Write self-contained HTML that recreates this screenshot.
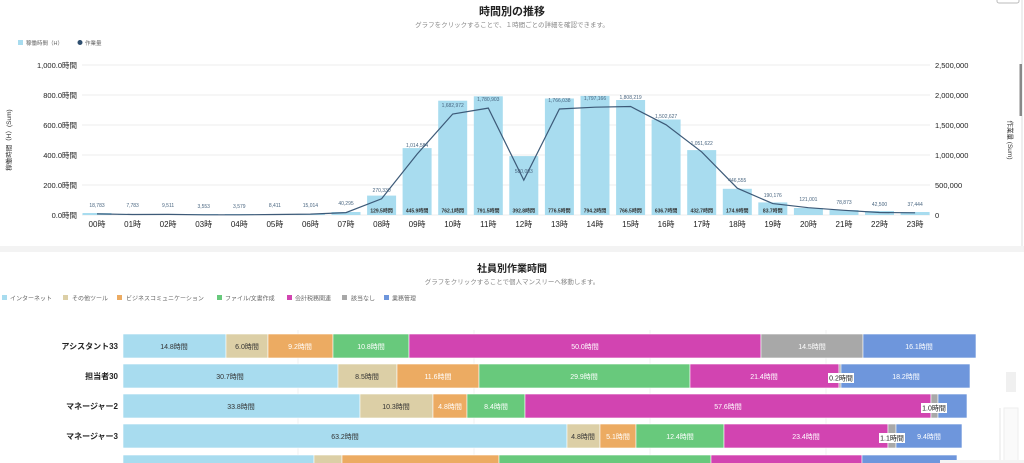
<!DOCTYPE html>
<html><head><meta charset="utf-8"><style>
html,body{margin:0;padding:0;background:#fff;width:1024px;height:463px;overflow:hidden;}
svg{display:block;font-family:"Liberation Sans","Noto Sans CJK JP",sans-serif;}
</style></head><body>
<svg width="1024" height="463" viewBox="0 0 1024 463" xmlns="http://www.w3.org/2000/svg">
<rect x="0" y="0" width="1024" height="463" fill="#fff"/>
<rect x="0" y="246" width="1024" height="6" fill="#f3f3f3"/>
<line x1="1022" y1="0" x2="1022" y2="246" stroke="#ddd" stroke-width="1"/>
<rect x="1019.5" y="64" width="2.5" height="52" fill="#888"/>
<rect x="997" y="-3" width="22" height="6" rx="2" fill="#fff" stroke="#bbb"/>

<text x="512" y="15" text-anchor="middle" font-size="11" font-weight="bold" fill="#222">時間別の推移</text>
<text x="512" y="27" text-anchor="middle" font-size="6.5" fill="#888">グラフをクリックすることで、１時間ごとの詳細を確認できます。</text>
<rect x="18" y="40" width="5" height="5" fill="#a8dcef"/>
<text x="26" y="45" font-size="5.5" fill="#666">稼働時間（H）</text>
<circle cx="80" cy="42.5" r="2.5" fill="#2f4f6f"/>
<text x="85" y="45" font-size="5.5" fill="#666">作業量</text>

<g stroke="#e8e8e8" stroke-width="0.8">
<line x1="82" y1="65" x2="930" y2="65"/><line x1="82" y1="95" x2="930" y2="95"/>
<line x1="82" y1="125" x2="930" y2="125"/><line x1="82" y1="155" x2="930" y2="155"/>
<line x1="82" y1="185" x2="930" y2="185"/><line x1="82" y1="215" x2="930" y2="215"/>
</g>
<g font-size="7.5" fill="#222" text-anchor="end">
<text x="77" y="68">1,000.0時間</text><text x="77" y="98">800.0時間</text><text x="77" y="128">600.0時間</text>
<text x="77" y="158">400.0時間</text><text x="77" y="188">200.0時間</text><text x="77" y="218">0.0時間</text>
</g>
<g font-size="7.5" fill="#222">
<text x="935" y="68">2,500,000</text><text x="935" y="98">2,000,000</text><text x="935" y="128">1,500,000</text>
<text x="935" y="158">1,000,000</text><text x="935" y="188">500,000</text><text x="935" y="218">0</text>
</g>
<text transform="translate(11,140) rotate(-90)" text-anchor="middle" font-size="6.5" fill="#333">稼働時間（H）(Sum)</text>
<text transform="translate(1008,140) rotate(90)" text-anchor="middle" font-size="6.5" fill="#333">作業量 (Sum)</text>

<g fill="#a8dcef">
<rect x="82.5" y="213" width="29" height="2"/><rect x="118.1" y="214" width="29" height="1"/>
<rect x="153.6" y="214" width="29" height="1"/><rect x="189.2" y="214" width="29" height="1"/>
<rect x="224.8" y="214" width="29" height="1"/><rect x="260.4" y="214" width="29" height="1"/>
<rect x="295.9" y="214" width="29" height="1"/><rect x="331.5" y="212" width="29" height="3"/>
<rect x="367.1" y="195.6" width="29" height="19.4"/><rect x="402.6" y="148.1" width="29" height="66.9"/>
<rect x="438.2" y="100.7" width="29" height="114.3"/><rect x="473.8" y="96.3" width="29" height="118.7"/>
<rect x="509.3" y="156.1" width="29" height="58.9"/><rect x="544.9" y="98.5" width="29" height="116.5"/>
<rect x="580.5" y="95.9" width="29" height="119.1"/><rect x="616.1" y="100" width="29" height="115"/>
<rect x="651.6" y="119.5" width="29" height="95.5"/><rect x="687.2" y="150.1" width="29" height="64.9"/>
<rect x="722.8" y="188.8" width="29" height="26.2"/><rect x="758.3" y="202.4" width="29" height="12.6"/>
<rect x="793.9" y="208" width="29" height="7"/><rect x="829.5" y="210" width="29" height="5"/>
<rect x="865" y="211" width="29" height="4"/><rect x="900.6" y="212" width="29" height="3"/>
</g>
<g font-size="5" font-weight="bold" fill="#333" text-anchor="middle">
<text x="381.6" y="212.5">129.5時間</text><text x="417.1" y="212.5">445.9時間</text><text x="452.7" y="212.5">762.1時間</text>
<text x="488.3" y="212.5">791.5時間</text><text x="523.8" y="212.5">392.8時間</text><text x="559.4" y="212.5">776.5時間</text>
<text x="595" y="212.5">794.2時間</text><text x="630.6" y="212.5">766.5時間</text><text x="666.1" y="212.5">636.7時間</text>
<text x="701.7" y="212.5">432.7時間</text><text x="737.3" y="212.5">174.9時間</text><text x="772.8" y="212.5">83.7時間</text>
</g>
<polyline fill="none" stroke="#3d5a78" stroke-width="1.2" points="97,213.9 132.6,214.5 168.1,214.4 203.7,214.8 239.3,214.8 274.9,214.5 310.4,214.1 346,212.6 381.6,198.8 417.1,154.1 452.7,114 488.3,108.1 523.8,180.2 559.4,109 595,107.2 630.6,106.5 666.1,124.8 701.7,151.9 737.3,188.2 772.8,203.6 808.4,207.7 844,210.3 879.5,212.5 915.1,212.8"/>
<g font-size="5" fill="#4a6680" text-anchor="middle">
<text x="97" y="207">18,783</text><text x="132.6" y="207">7,783</text><text x="168.1" y="207">9,511</text>
<text x="203.7" y="208">3,553</text><text x="239.3" y="208">3,579</text><text x="274.9" y="207">8,411</text>
<text x="310.4" y="207">15,014</text><text x="346" y="205">40,295</text><text x="381.6" y="192">270,330</text>
<text x="417.1" y="147">1,014,584</text><text x="452.7" y="107">1,682,972</text><text x="488.3" y="101">1,780,903</text>
<text x="523.8" y="173">580,003</text><text x="559.4" y="102">1,766,038</text><text x="595" y="100">1,797,166</text>
<text x="630.6" y="99">1,808,219</text><text x="666.1" y="118">1,502,627</text><text x="701.7" y="145">1,051,622</text>
<text x="737.3" y="182">446,555</text><text x="772.8" y="197">190,176</text><text x="808.4" y="201">121,001</text>
<text x="844" y="204">78,873</text><text x="879.5" y="206">42,500</text><text x="915.1" y="206">37,444</text>
</g>
<g font-size="8" fill="#222" text-anchor="middle">
<text x="97" y="227">00時</text><text x="132.6" y="227">01時</text><text x="168.1" y="227">02時</text><text x="203.7" y="227">03時</text>
<text x="239.3" y="227">04時</text><text x="274.9" y="227">05時</text><text x="310.4" y="227">06時</text><text x="346" y="227">07時</text>
<text x="381.6" y="227">08時</text><text x="417.1" y="227">09時</text><text x="452.7" y="227">10時</text><text x="488.3" y="227">11時</text>
<text x="523.8" y="227">12時</text><text x="559.4" y="227">13時</text><text x="595" y="227">14時</text><text x="630.6" y="227">15時</text>
<text x="666.1" y="227">16時</text><text x="701.7" y="227">17時</text><text x="737.3" y="227">18時</text><text x="772.8" y="227">19時</text>
<text x="808.4" y="227">20時</text><text x="844" y="227">21時</text><text x="879.5" y="227">22時</text><text x="915.1" y="227">23時</text>
</g>

<text x="512" y="272" text-anchor="middle" font-size="10" font-weight="bold" fill="#222">社員別作業時間</text>
<text x="512" y="284" text-anchor="middle" font-size="6.5" fill="#888">グラフをクリックすることで個人マンスリーへ移動します。</text>
<g font-size="6" fill="#666">
<rect x="2" y="295" width="5" height="5" fill="#a8dcef"/><text x="10" y="300.5">インターネット</text>
<rect x="63" y="295" width="5" height="5" fill="#dccfa6"/><text x="72" y="300.5">その他ツール</text>
<rect x="117" y="295" width="5" height="5" fill="#ecab62"/><text x="126" y="300.5">ビジネスコミュニケーション</text>
<rect x="217" y="295" width="5" height="5" fill="#68c97c"/><text x="225" y="300.5">ファイル/文書作成</text>
<rect x="287" y="295" width="5" height="5" fill="#d244b1"/><text x="295" y="300.5">会計税務関連</text>
<rect x="342" y="295" width="5" height="5" fill="#a8a8a8"/><text x="351" y="300.5">該当なし</text>
<rect x="384" y="295" width="5" height="5" fill="#6e96dc"/><text x="392" y="300.5">業務管理</text>
</g>
<g stroke="#eee" stroke-width="0.8">
<line x1="298" y1="330" x2="298" y2="463"/><line x1="474" y1="330" x2="474" y2="463"/>
<line x1="650" y1="330" x2="650" y2="463"/><line x1="826" y1="330" x2="826" y2="463"/>
</g>
<line x1="1000" y1="408" x2="1000" y2="463" stroke="#e4e4e4"/>
<rect x="1004" y="408" width="14" height="55" fill="#fafafa" stroke="#eee"/>
<rect x="1006" y="372" width="10" height="20" fill="#f0f0f0"/>
<g font-size="8" font-weight="bold" fill="#222" text-anchor="end">
<text x="118" y="349">アシスタント33</text><text x="118" y="379">担当者30</text>
<text x="118" y="409">マネージャー2</text><text x="118" y="439">マネージャー3</text>
</g>
<g stroke="#fff" stroke-width="0.6">
<rect x="123" y="334" width="103" height="24" fill="#a8dcef"/><rect x="226" y="334" width="42" height="24" fill="#dccfa6"/>
<rect x="268" y="334" width="65" height="24" fill="#ecab62"/><rect x="333" y="334" width="76" height="24" fill="#68c97c"/>
<rect x="409" y="334" width="352" height="24" fill="#d244b1"/><rect x="761" y="334" width="102" height="24" fill="#a8a8a8"/>
<rect x="863" y="334" width="113" height="24" fill="#6e96dc"/>
<rect x="123" y="364" width="215" height="24" fill="#a8dcef"/><rect x="338" y="364" width="59" height="24" fill="#dccfa6"/>
<rect x="397" y="364" width="82" height="24" fill="#ecab62"/><rect x="479" y="364" width="211" height="24" fill="#68c97c"/>
<rect x="690" y="364" width="149" height="24" fill="#d244b1"/><rect x="839" y="364" width="2" height="24" fill="#a8a8a8"/>
<rect x="841" y="364" width="129" height="24" fill="#6e96dc"/>
<rect x="123" y="394" width="237" height="24" fill="#a8dcef"/><rect x="360" y="394" width="73" height="24" fill="#dccfa6"/>
<rect x="433" y="394" width="34" height="24" fill="#ecab62"/><rect x="467" y="394" width="58" height="24" fill="#68c97c"/>
<rect x="525" y="394" width="406" height="24" fill="#d244b1"/><rect x="931" y="394" width="7" height="24" fill="#a8a8a8"/>
<rect x="938" y="394" width="29" height="24" fill="#6e96dc"/>
<rect x="123" y="424" width="444" height="24" fill="#a8dcef"/><rect x="567" y="424" width="33" height="24" fill="#dccfa6"/>
<rect x="600" y="424" width="36" height="24" fill="#ecab62"/><rect x="636" y="424" width="88" height="24" fill="#68c97c"/>
<rect x="724" y="424" width="164" height="24" fill="#d244b1"/><rect x="888" y="424" width="8" height="24" fill="#a8a8a8"/>
<rect x="896" y="424" width="66" height="24" fill="#6e96dc"/>
<rect x="123" y="455" width="191" height="10" fill="#a8dcef"/><rect x="314" y="455" width="28" height="10" fill="#dccfa6"/>
<rect x="342" y="455" width="157" height="10" fill="#ecab62"/><rect x="499" y="455" width="212" height="10" fill="#68c97c"/>
<rect x="711" y="455" width="151" height="10" fill="#d244b1"/><rect x="862" y="455" width="95" height="10" fill="#6e96dc"/>
</g>
<rect x="940" y="460" width="84" height="3" fill="#f4f4f4"/>
<g font-size="7" text-anchor="middle" fill="#333">
<text x="174" y="349">14.8時間</text><text x="247" y="349">6.0時間</text>
<text x="300" y="349" fill="#fff">9.2時間</text><text x="371" y="349" fill="#fff">10.8時間</text>
<text x="585" y="349" fill="#fff">50.0時間</text><text x="812" y="349" fill="#fff">14.5時間</text><text x="919" y="349" fill="#fff">16.1時間</text>
<text x="230" y="379">30.7時間</text><text x="367" y="379">8.5時間</text>
<text x="438" y="379" fill="#fff">11.6時間</text><text x="584" y="379" fill="#fff">29.9時間</text>
<text x="764" y="379" fill="#fff">21.4時間</text><text x="906" y="379" fill="#fff">18.2時間</text>
<text x="241" y="409">33.8時間</text><text x="396" y="409">10.3時間</text>
<text x="450" y="409" fill="#fff">4.8時間</text><text x="496" y="409" fill="#fff">8.4時間</text>
<text x="728" y="409" fill="#fff">57.6時間</text>
<text x="345" y="439">63.2時間</text><text x="583" y="439">4.8時間</text>
<text x="618" y="439" fill="#fff">5.1時間</text><text x="680" y="439" fill="#fff">12.4時間</text>
<text x="806" y="439" fill="#fff">23.4時間</text><text x="929" y="439" fill="#fff">9.4時間</text>
</g>
<g font-size="7" text-anchor="middle" fill="#222">
<rect x="828" y="373" width="26" height="10" fill="#fff"/><text x="841" y="380.5">0.2時間</text>
<rect x="921" y="403" width="26" height="10" fill="#fff"/><text x="934" y="410.5">1.0時間</text>
<rect x="879" y="433" width="26" height="10" fill="#fff"/><text x="892" y="440.5">1.1時間</text>
</g>
</svg>
</body></html>
